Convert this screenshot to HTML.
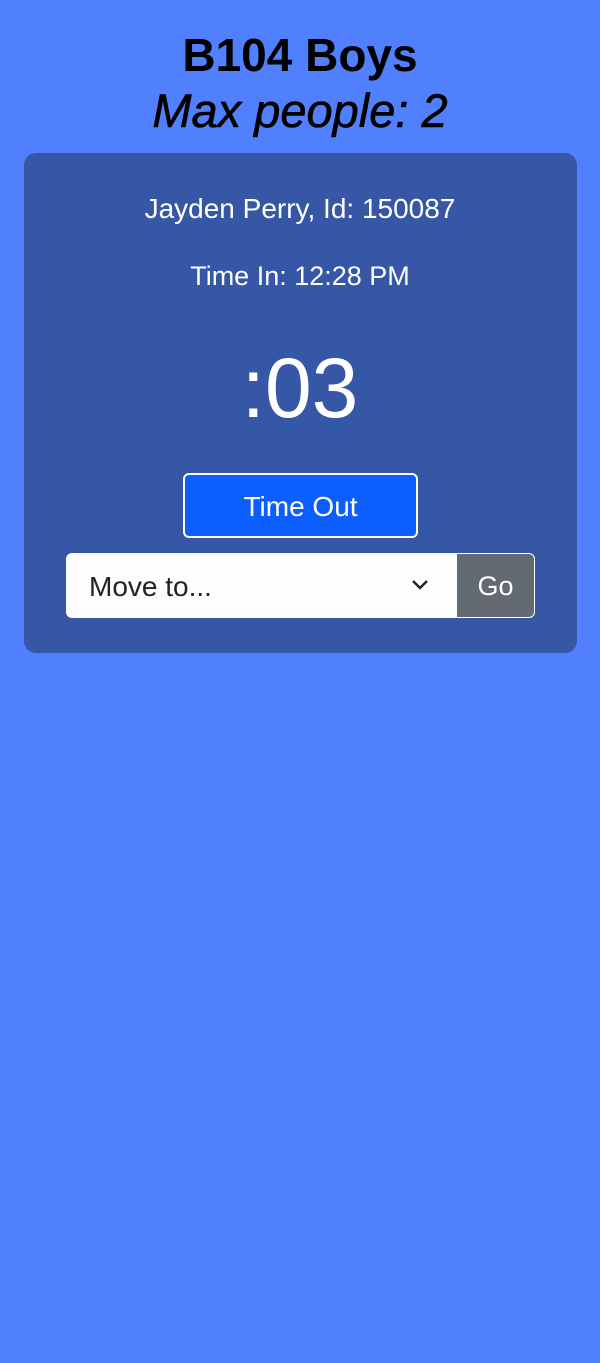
<!DOCTYPE html>
<html><head><style>
body{margin:0;width:600px;height:1363px;background:#5080fe;font-family:"Liberation Sans",sans-serif;position:relative;overflow:hidden}
.t{position:absolute;left:0;width:600px;text-align:center}
.card{position:absolute;left:24px;top:153px;width:553px;height:500px;background:#3656a6;border-radius:12px}
</style></head><body>
<div class="t" style="top:29px;font-size:46px;font-weight:bold;line-height:52px">B104 Boys</div>
<div class="t" style="top:84px;font-size:47px;font-style:italic;line-height:54px;-webkit-text-stroke:0.6px #000">Max people: 2</div>
<div class="card"></div>
<div class="t" style="top:193px;font-size:28px;color:#fff;line-height:32px">Jayden Perry, Id: 150087</div>
<div class="t" style="top:260px;font-size:27px;color:#fff;line-height:32px">Time In: 12:28 PM</div>
<div class="t" style="top:341px;font-size:84px;color:#fff;line-height:94px">:03</div>
<div style="position:absolute;left:183px;top:473px;width:231px;height:61px;background:#0d5efe;border:2px solid #fff;border-radius:6px;color:#fff;font-size:28px;text-align:center;line-height:63px">Time Out</div>
<div style="position:absolute;left:66px;top:553px;width:390px;height:65px;background:#fdfcff;border-radius:6px 0 0 6px;font-size:28px;color:#222;line-height:67px;text-indent:23px">Move to...
<svg style="position:absolute;left:344px;top:25px" width="20" height="14" viewBox="0 0 20 14"><path d="M3 3l7 7 7-7" fill="none" stroke="#222" stroke-width="2.5"/></svg></div>
<div style="position:absolute;left:456px;top:553px;width:77px;height:63px;background:#636a73;border:1px solid #fff;border-radius:0 6px 6px 0;color:#fff;font-size:27px;text-align:center;line-height:65px">Go</div>
</body></html>
